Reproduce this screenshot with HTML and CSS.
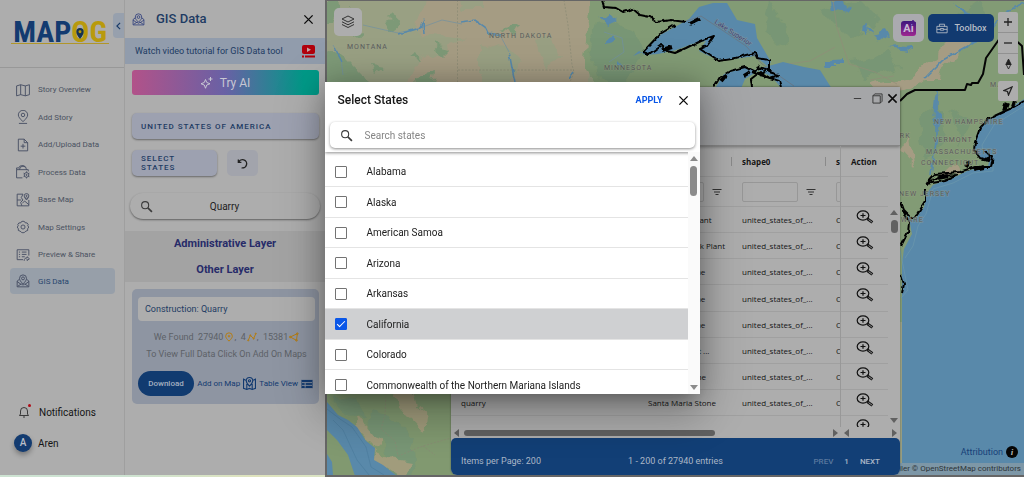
FILE: index.html
```html
<!DOCTYPE html>
<html lang="en">
<head>
<meta charset="utf-8">
<title>MAPOG - GIS Data</title>
<link rel="stylesheet" href="styles.css">
</head>
<body>
<svg class="defs" aria-hidden="true">
  <symbol id="close" viewBox="0 0 12 12"><path d="M1.5 1.5l9 9M10.5 1.5l-9 9"/></symbol>
  <symbol id="search" viewBox="0 0 24 24"><circle cx="9.5" cy="9.5" r="6.5"/><path d="M14.5 14.5L22 22" stroke-width="3"/></symbol>
  <symbol id="gis" viewBox="0 0 24 24"><path d="M6 9l-4 3v10h20V12l-4-3M2 13l7 5M22 13l-7 5M3 21l6-4 3 2 3-2 6 4M12 17C8 13 6 10.500 6 7.500a6 6 0 0 1 12 0c0 3-2 5.500-6 9.500z"/><circle cx="12" cy="7.500" r="2.500"/></symbol>
  <symbol id="zoomin" viewBox="0 0 18 14"><ellipse cx="7" cy="5.500" rx="5.800" ry="4.600"/><path d="M4.500 5.500h5M7 3.300v4.400"/><path d="M11.500 8.800l4.900 3.600" stroke-width="2.800"/><path d="M12.500 9.600l3.500 2.500" stroke="#adadad" stroke-width=".8"/></symbol>
  <symbol id="filter" viewBox="0 0 10 8"><path d="M.5 1.500h9M2 4h6M3.500 6.500h3"/></symbol>
</svg>

<div class="app">
  <aside class="sidebar">
    <div class="brand"><a class="logo" href="#" aria-label="MAPOG"><span>MAP</span><span class="og">OG</span>
      <svg class="pin" viewBox="0 0 8 12"><path d="M4 12C1 8 0 6 0 4a4 4 0 0 1 8 0c0 2-1 4-4 8z"/><circle cx="4" cy="4" r="1.600"/></svg></a>
      <button class="collapse" aria-label="Collapse"><svg viewBox="0 0 6 10"><path d="M5 1L1 5l4 4"/></svg></button>
    </div>
    <ul class="nav">
      <li><a href="#"><svg viewBox="0 0 24 24"><path d="M1 5l7-2v17l-7 2zM8 3l8 2v17l-8-2M16 5l7-2v17l-7 2"/></svg>Story Overview</a></li>
      <li><a href="#"><svg viewBox="0 0 24 24"><path d="M12 20C7 15 4 12 4 8.500a8 8 0 0 1 16 0C20 12 17 15 12 20z"/><circle cx="12" cy="8.500" r="3"/><path d="M5 23h14"/></svg>Add Story</a></li>
      <li><a href="#"><svg viewBox="0 0 24 24"><path d="M14 2H4v20h16V8zM14 2v6h6M12 10v8M8 14h8"/></svg>Add/Upload Data</a></li>
      <li><a href="#"><svg viewBox="0 0 24 24"><path d="M11 22H1V8h20v3M1 8V5h5M6 8a6 6 0 0 1 12 0M5 4a6 4 0 0 1 11-1"/><circle cx="18" cy="17" r="4"/><circle cx="18" cy="17" r="1"/><path d="M18 11v2M18 21v2M13 14l2 1M21 19l2 1M13 20l2-1M21 15l2-1"/></svg>Process Data</a></li>
      <li><a href="#"><svg viewBox="0 0 24 24"><path d="M12 2H2v20h20V12M12 2l-3 6 3 4-4 4 2 6M2 12h7M11 17l4-3 7 6"/><circle cx="18" cy="5" r="4"/><circle cx="18" cy="5" r="1"/><path d="M15 8l3 4 3-4"/></svg>Base Map</a></li>
      <li><a href="#"><svg viewBox="0 0 24 24"><path d="M9 3l3-1 3 1 1 2 3 0 2 3-1 2 2 2-2 3 0 3-3 1-2 2-3 1-3-1-2-2-3-1 0-3-2-3 2-2-1-2 2-3 3 0z"/><circle cx="12" cy="12" r="3.500"/></svg>Map Settings</a></li>
      <li><a href="#"><svg viewBox="0 0 24 24"><path d="M12 20H2V3h20v10M5 7h2M10 7h8M5 11h2M10 11h8M5 15h2M10 15h5M14 22c0-4 2-5 5-5v-2l4 3.500-4 3V19"/></svg>Preview &amp; Share</a></li>
      <li class="active"><a href="#"><svg><use href="#gis"/></svg>GIS Data</a></li>
    </ul>
    <div class="account">
      <a href="#"><span class="bell"><svg viewBox="0 0 24 24"><path d="M3 19h18l-2-3V10a7 7 0 0 0-14 0v6zM10 22h4"/></svg></span>Notifications</a>
      <a href="#"><span class="avatar">A</span>Aren</a>
    </div>
  </aside>

  <section class="panel">
    <header class="panel-head"><svg class="gis"><use href="#gis"/></svg><h1>GIS Data</h1><button class="plain" aria-label="Close panel"><svg class="x"><use href="#close"/></svg></button></header>
    <a class="tutorial" href="#">Watch video tutorial for GIS Data tool<svg viewBox="0 0 13 13"><rect width="13" height="9" rx="2"/><path class="play" d="M5 2.500l4 2.200-4 2.200z"/><path d="M0 10.500h2v2H0zM3 10.500h10v2H3z"/></svg></a>
    <div class="controls">
      <button class="tryai"><svg viewBox="0 0 24 24"><path d="M9 5l2.500 6L18 13.500 11.500 16 9 22.500 6.500 16 0 13.500 6.500 11zM19 0v8M15 4h8"/></svg>Try AI</button>
      <button class="pick country">UNITED STATES OF AMERICA</button>
      <div class="pick-row"><button class="pick">SELECT<br>STATES</button><button class="reset" aria-label="Reset"><svg viewBox="0 0 12 12"><path d="M1.500 1.500v3.300h3.300M1.800 4.800A4.500 4.500 0 1 1 5 10.700"/></svg></button></div>
      <label class="find"><svg><use href="#search"/></svg><input type="text" value="Quarry" aria-label="Search layer"></label>
    </div>
    <div class="layers"><a href="#">Administrative Layer</a><a href="#">Other Layer</a></div>
    <article class="card">
      <h2>Construction: Quarry</h2>
      <p>We Found&nbsp; 27940<svg viewBox="0 0 12 12"><path d="M6 11C3 8 2 6.500 2 5a4 4 0 0 1 8 0c0 1.500-1 3-4 6zM4.500 5h3M6 3.500v3"/></svg>,&nbsp; 4<svg viewBox="0 0 12 12"><path d="M1.500 10L4 4l4 4 2.500-6"/><circle cx="1.500" cy="10" r=".7"/><circle cx="4" cy="4" r=".7"/><circle cx="8" cy="8" r=".7"/><circle cx="10.500" cy="2" r=".7"/></svg>,&nbsp; 15381<svg viewBox="0 0 12 12"><path d="M1.500 6L10 2 9 10z"/><circle cx="1.500" cy="6" r="1"/><circle cx="10" cy="2" r="1"/><circle cx="9" cy="10" r="1"/></svg></p>
      <p>To View Full Data Click On Add On Maps</p>
      <div class="actions">
        <button class="download">Download</button>
        <button class="plain">Add on Map<svg viewBox="0 0 24 24"><path d="M5 6L1 4v17l6 2 5-2 5 2 6-2V4l-4 2M7 13v10M17 13v10M12 17C8 13 6 10 6 7a6 6 0 0 1 12 0c0 3-2 6-6 10z"/><circle cx="12" cy="7" r="2"/></svg></button>
        <button class="plain">Table View<svg class="tbl" viewBox="0 0 13 10"><rect width="13" height="10" rx="1"/><path d="M1 3.500h11M1 6.500h11M4.500 3.500V9"/></svg></button>
      </div>
    </article>
  </section>

  <main class="map">
    <svg class="terrain" viewBox="327 1 697 474" preserveAspectRatio="xMidYMid slice">
      <defs><filter id="ragged" x="-5%" y="-5%" width="110%" height="110%"><feTurbulence type="fractalNoise" baseFrequency="0.060" numOctaves="3" seed="4"/><feDisplacementMap in="SourceGraphic" scale="16" xChannelSelector="R" yChannelSelector="G"/></filter>
      <filter id="rough" x="-5%" y="-5%" width="110%" height="110%"><feTurbulence type="fractalNoise" baseFrequency="0.150" numOctaves="2" seed="8"/><feDisplacementMap in="SourceGraphic" scale="4" xChannelSelector="R" yChannelSelector="G"/></filter></defs>
      <rect x="327" y="1" width="697" height="474" fill="#99a083"/>
      <g filter="url(#ragged)">
        <path fill="#a59c83" d="M425-10H590V95H400l20-35 45-20-50-8z"/>
        <path fill="#99a083" d="M480 50l20-8 20 20-10 30H480zM535 40l15-5 8 25-14 8zM455-6h25v14h-20z"/>
        <path fill="#829b74" d="M592-10H1040V320H690V95H600L585 60z"/>
        <path fill="#789674" d="M597 25l18-5 20 12 10 25-22 30-25-10-8-30zM820 10l40-10 20 20-30 20zM770 0l20 30-10 15-16-15zM850 60l40-8 10 14-35 14zM950 20l30-20 10 20-30 20zM920 120l20-16 6 40-20 20zM950 110l20 10-10 25z"/>
        <path fill="#7d9977" d="M325 50l20 8 15 15 25 18h-60zM385 20l10-4 4 8-8 6zM405 60l10-6 6 8zM430 45l18 4-6 6zM372 66l12 2-8 6zM415 78l22-6-4 18h-16zM350 34l14-2-4 8zM325 0h15l-8 22h-7zM500 30l20-4-5 8zM350 6l8 4-8 4z"/>
        <path fill="#a59c83" d="M870 85l40-8 30-25 25-25 14 4-30 30-34 28-40 8zM900 150l10-15 4 30zM925 80l14-14-2 14zM940 175l14-12 4 10z"/>
        <path fill="#81996f" d="M320 385h140v100H320z"/>
        <path fill="#789674" d="M372 410l20 5 20 25 4 40h-22l-10-35-14-14zM330 395l25 2 12 22-20-4z"/>
        <path fill="#a19c7c" d="M395 385h16l5 22 12 10-2 16-14-15-14-8-4-18zM355 418l14 8 12 16-8 6-16-16zM372 448l14 10 24 4-5 20-18-12-18-8z"/>
        <path fill="#5989aa" d="M598 18l10-4 8 4-12 8zM606 36l6-2v8l-6 2zM617 60l4 4-4 3zM830 0l20 8-4 4-14-2zM872 32l14-4 4 10-14-2zM950 2l20 10-4 6zM824 62l20-2v6h-16zM935 95l5 4-2 30-5-8zM868 22l4 8-8 4zM890 48l18-2 4 6z"/>
      </g>
      <g fill="none" stroke="#898974" stroke-width=".7"><path stroke-dasharray="2 1.500" d="M457.500 0v88M458 70h116M564 0l4 25 4 40 2 7-4 10M386 393l-1 22-4 14 14 12 3 15 25-10 28-8M423 446l12 9"/><path stroke="#918c79" d="M833 0l4 28 12 36 26 8 22 12M780 65l30-4 25-14M870 80l24-4"/><path stroke="#7191a0" d="M363 25l35 8 22-5 22-8 20 4M333 45l8 14 2 16M500 35l9 17M604 32l18 6 2 14-15 10"/></g>
      <g fill="none" stroke="#5989aa" stroke-width="1.600" filter="url(#rough)"><path d="M398 34l12-3 10-3 3-6 1 12M461 22l14-2 10 7 3 6 14 2M509 52l3 16 3 14M569 78l4-6M1028 0l-25 14-10 14-25 18-25 14-18 18M937 90v45l-6 40M335 48l7 14"/></g>
      <g fill="#5989aa">
        <path d="M643 52l8-9 9-8 15-8 14-8 10-12 14-4 14 0 10 17 18 4 2 14 14 24-4 4-12-10-14 2-20 2-14-5-8-4 7-10-14 3-16 6-18 4-13 1-6-4-6 5z"/>
        <path d="M765 67l18-5 21 5 16 3 12 19h-50l-10-12-16-8z"/>
        <path d="M714 90l10-16 22-7 12 4-13 8-5 12z"/>
        <path d="M1024 99l-12 8-9 5-15 7-8 9-5 14-1 8 6 8 9 4-1 4-13 3-8 2-10 5-24 9-6 8-3 14-8 11-5 2-5-8 4 12 2 10-8 15-2 15v217h126z"/>
        <path d="M327 402l11 13 10 5 9 7 9 14 9 7-1 12 9 5 14 11h-42l-7-21-11-15-10-10zM327 454l5 8 1 13h-6z"/>
      </g>
      <g fill="none" stroke="#4c7d9d" stroke-width=".7"><path d="M327 409l13 10 12 8 14 20 5 20 13 8M333 420l10 10 14 30 12 15"/><path stroke="#6b98ac" d="M1024 106l-30 19-12 20 1 6 10 4v16l-20 2-20 10-20 6-7 25-8 12-5 20-8 12M900 250l8 40-7 8"/><path stroke="#6c727c" d="M684 22l17-6 45 30 16 18 32 22"/></g>
      <g fill="none" stroke="#050505" stroke-width="2" stroke-linejoin="round">
        <path d="M900 101l7-7 8-4h50l2-6 4 1 1-2 6 0 5-9 3-16 14-20h13l9 8 2 29"/>
        <g filter="url(#rough)">
          <path d="M602 0l2 7 12 1 7 4 10-3 7 6 10 2 7 5 14-2 14 2"/>
          <path d="M643 52l17-18 15-9M643 52l6 2 12-9 6 6 8 2 11-5 14-7 14-5-7 10-7 3 9 6 9 6 14-2 14-4 9-2 2 5 12 2v12l10 3-9 3-10-3-8-3"/>
          <path d="M714 87l6-10 10-6 15-4 10 5 4-7M752 87l-1-8 9-7 10 6 9 3 2 6M757 68l10 2-8 6"/>
          <path d="M1024 101l-12 7-9 4-15 7-8 9-5 14-1 8 6 8 9 3 1-7-4-2 7 4-2 11-16 0-6 2-10 3-24 2-8 9M926 184l14-8 18-1-14 6-18 3M925 190v12l-8 13-5 3-8-8-3-8M904 211l5 12-1 9-7 14M901 275l3 9-2 9"/>
        </g>
        <path stroke-width="4" filter="url(#rough)" d="M690 24l10-5M721 81l5-6M744 76l5-3M662 50l10-3M1004 111l3-8M1012 107l2-6M966 167l3-6M974 169l10-2M985 160l4-2M938 178l10-2"/>
      </g>
      <g class="places">
        <text x="347" y="49">MONTANA</text><text x="489" y="38">NORTH DAKOTA</text><text x="604" y="70">MINNESOTA</text>
        <text x="934" y="124">NEW HAMPSHIRE</text><text x="933" y="142">VERMONT</text><text x="926" y="154">MASSACHUSETTS</text><text x="921" y="165">CONNECTICUT</text><text x="899" y="196">NEW JERSEY</text><text x="880" y="222">DELAWARE</text><text x="868" y="138">NEW YORK</text><text x="990" y="87">MAINE</text>
        <text class="lake" transform="translate(714 23) rotate(33)">Lake Superior</text>
      </g>
    </svg>

    <button class="tile basemap" aria-label="Layers"><svg viewBox="0 0 14 14"><path d="M7 1l6 3-6 3-6-3zM1 6.800l6 3 6-3M1 9.500l6 3 6-3"/></svg></button>
    <div class="tools">
      <button class="tile ai" aria-label="AI"><span>Ai</span><svg viewBox="0 0 6 6"><path d="M3 0v6M0 3h6"/></svg></button>
      <button class="toolbox"><svg viewBox="0 0 14 12"><path d="M1 3.500h12v7.500H1zM4 3.500V1h6v2.500M1 7h4M9 7h4M5 6h4v2H5z"/></svg>Toolbox</button>
      <div class="zooms">
        <div class="stack"><button aria-label="Zoom in"><svg viewBox="0 0 10 10"><path d="M5 1v8M1 5h8"/></svg></button><button aria-label="Zoom out"><svg viewBox="0 0 10 10"><path d="M1 5h8"/></svg></button><button aria-label="Compass"><svg class="compass" viewBox="0 0 10 12"><path d="M5 0l3 6H2z" fill="#222"/><path d="M2.500 6L5 11l2.500-5z"/></svg></button></div>
        <button class="locate" aria-label="Locate"><svg viewBox="0 0 10 10"><path d="M9 1L5.500 9 4.500 5.500 1 4.500z"/></svg></button>
      </div>
    </div>
    <a class="attr" href="#">Attribution <b>i</b></a>
    <div class="credits">© MapTiler © OpenStreetMap contributors</div>

    <section class="window">
      <header><button aria-label="Minimize"><svg viewBox="0 0 12 12"><path d="M2 6h8"/></svg></button><button class="max" aria-label="Maximize"><svg viewBox="0 0 12 12"><path d="M1 3h8v8H1zM1 3l2-2h8v8l-2 2"/></svg></button><button class="shut" aria-label="Close"><svg><use href="#close"/></svg></button></header>
      <div class="grid">
        <div class="main">
          <table>
            <colgroup><col class="c1"><col class="c2"><col class="c2"><col class="c2"></colgroup>
            <tr class="h"><th>type</th><th>name</th><th>shape0</th><th>shape1</th></tr>
            <tr class="f"><td><div><input aria-label="Filter type"><svg><use href="#filter"/></svg></div></td><td><div><input aria-label="Filter name"><svg><use href="#filter"/></svg></div></td><td><div><input aria-label="Filter shape0"><svg><use href="#filter"/></svg></div></td><td><div><input aria-label="Filter shape1"><svg><use href="#filter"/></svg></div></td></tr>
            <tr><td>quarry</td><td>Sandy Rock Plant</td><td>united_states_of_...</td><td>California</td></tr>
            <tr><td>quarry</td><td>Mountain Rock Plant</td><td>united_states_of_...</td><td>California</td></tr>
            <tr><td>quarry</td><td>Old Stone Mine</td><td>united_states_of_...</td><td>California</td></tr>
            <tr><td>quarry</td><td>Old Stone Mine</td><td>united_states_of_...</td><td>California</td></tr>
            <tr><td>quarry</td><td>Old Stone Mine</td><td>united_states_of_...</td><td>California</td></tr>
            <tr><td>quarry</td><td>Valley Cement ...</td><td>united_states_of_...</td><td>California</td></tr>
            <tr><td>quarry</td><td>Southern Stone</td><td>united_states_of_...</td><td>California</td></tr>
            <tr><td>quarry</td><td>Santa Maria Stone</td><td>united_states_of_...</td><td>California</td></tr>
            <tr><td>quarry</td><td>Santa Maria</td><td>united_states_of_...</td><td>California</td></tr>
          </table>
        </div>
        <div class="pinned">
          <table>
            <tr class="h"><th>Action</th></tr><tr class="f"><td></td></tr>
            <tr><td><button aria-label="Zoom to row 1"><svg><use href="#zoomin"/></svg></button></td></tr>
            <tr><td><button aria-label="Zoom to row 2"><svg><use href="#zoomin"/></svg></button></td></tr>
            <tr><td><button aria-label="Zoom to row 3"><svg><use href="#zoomin"/></svg></button></td></tr>
            <tr><td><button aria-label="Zoom to row 4"><svg><use href="#zoomin"/></svg></button></td></tr>
            <tr><td><button aria-label="Zoom to row 5"><svg><use href="#zoomin"/></svg></button></td></tr>
            <tr><td><button aria-label="Zoom to row 6"><svg><use href="#zoomin"/></svg></button></td></tr>
            <tr><td><button aria-label="Zoom to row 7"><svg><use href="#zoomin"/></svg></button></td></tr>
            <tr><td><button aria-label="Zoom to row 8"><svg><use href="#zoomin"/></svg></button></td></tr>
            <tr><td><button aria-label="Zoom to row 9"><svg><use href="#zoomin"/></svg></button></td></tr>
          </table>
        </div>
        <div class="vbar dark"><i class="up"></i><i class="thumb"></i><i class="down"></i></div>
        <div class="hbar"><i class="left"></i><i class="thumb"></i><i class="right"></i></div>
        <div class="hbar small"><i class="left"></i><i class="right"></i></div>
      </div>
      <footer><span>Items per Page: 200</span><span class="range">1 - 200 of 27940 entries</span><div><button disabled>PREV</button><span>1</span><button>NEXT</button></div></footer>
    </section>
  </main>
</div>
<div class="underline"></div>

<div class="overlay">
  <div class="dialog" role="dialog" aria-labelledby="dlg">
    <div class="dialog-top">
      <header><h2 id="dlg">Select States</h2><button class="apply">APPLY</button><button class="plain" aria-label="Close dialog"><svg class="x"><use href="#close"/></svg></button></header>
      <label class="states-search"><svg><use href="#search"/></svg><input type="text" placeholder="Search states" aria-label="Search states"></label>
    </div>
    <div class="dialog-body">
      <ul class="states">
        <li><label><input type="checkbox">Alabama</label></li>
        <li><label><input type="checkbox">Alaska</label></li>
        <li><label><input type="checkbox">American Samoa</label></li>
        <li><label><input type="checkbox">Arizona</label></li>
        <li><label><input type="checkbox">Arkansas</label></li>
        <li class="on"><label><input type="checkbox" checked>California</label></li>
        <li><label><input type="checkbox">Colorado</label></li>
        <li><label><input type="checkbox">Commonwealth of the Northern Mariana Islands</label></li>
      </ul>
      <div class="vbar"><i class="up"></i><i class="thumb"></i><i class="down"></i></div>
    </div>
  </div>
</div>
</body>
</html>
```
FILE: styles.css
```css
* { box-sizing: border-box; }
body { margin: 0; height: 100vh; overflow: hidden; display: flex; flex-direction: column; font-family: Roboto, sans-serif; font-size: 10px; color: #151515; background: #adadad; }
button { font: inherit; color: inherit; border: 0; padding: 0; background: none; display: flex; align-items: center; justify-content: center; }
input { font: inherit; color: inherit; min-width: 0; }
a { color: inherit; text-decoration: none; }
h1, h2, p, ul { margin: 0; padding: 0; font-weight: 400; }
li { list-style: none; }
svg { fill: none; stroke: currentColor; stroke-width: 1.5; flex: none; }
.defs { position: absolute; width: 0; height: 0; }
.app { flex: 1; min-height: 0; display: grid; grid-template-columns: 125px 200px minmax(0, 1fr); }
.underline { height: 2px; background: linear-gradient(90deg, #cde3d2 0 12%, #dfe3bd 25%, #cfe3d0 45%, #e6cfd6 55%, #e2e3bb 80%, #cde5d5); }
.x { width: 11px; height: 11px; color: #0c0c0c; }

.sidebar { display: flex; flex-direction: column; border-right: 1px solid #9f9f9f; }
.brand { height: 68px; border-bottom: 1px solid #989898; display: flex; align-items: flex-start; justify-content: flex-end; padding-top: 13px; gap: 4px; }
.logo { position: relative; display: flex; margin-top: 1px; height: 30px; padding: 0 2px; border-bottom: 1px solid #b0962a; font: bold 30px/36px "Roboto Condensed", "Open Sans Condensed", "Noto Sans Condensed", "DejaVu Sans Condensed", sans-serif; color: #133b70; }
.logo .og { color: #b99a0c; }
.pin { position: absolute; right: 25px; top: 14px; width: 8px; height: 11px; fill: #16334f; stroke: none; }
.pin circle { fill: #b99a0c; }
.collapse { width: 11px; height: 25px; background: #97a0ad; border-radius: 4px 0 0 4px; color: #1b3c68; }
.collapse svg { width: 5px; height: 8px; }
.nav { padding: 8px 9px 0 10px; }
.nav li { height: 27px; display: grid; }
.nav li:nth-child(even) { height: 28px; }
.nav a { display: flex; align-items: center; gap: 8px; padding-left: 6px; font-size: 8px; color: #4b5261; border-radius: 4px; }
.nav svg { width: 14px; height: 14px; color: #424a60; }
.nav li.active { height: 26px; }
.nav .active a { background: #979fa9; color: #27466e; }
.account { margin-top: auto; padding: 0 0 22px 14px; display: grid; gap: 11px; }
.account a { display: flex; align-items: center; gap: 6px; height: 20px; }
.bell { position: relative; width: 19px; display: grid; place-items: center; }
.bell svg { width: 12px; height: 12px; }
.bell::after { content: ""; position: absolute; right: 2px; top: -2px; width: 3px; height: 3px; border-radius: 50%; background: #b00b16; }
.avatar { width: 18px; height: 18px; border-radius: 50%; background: #133b70; color: #b9bfc8; font-weight: 500; line-height: 18px; text-align: center; box-shadow: 0 3px 5px rgba(0,0,0,.3); }

.panel { display: flex; flex-direction: column; color: #1d3b63; }
.panel-head { height: 38px; display: flex; align-items: center; padding: 0 11px 0 7px; gap: 11px; }
.panel-head .gis { width: 13px; height: 13px; color: #2c3c7b; }
.panel-head h1 { flex: 1; font-size: 13px; line-height: 15px; padding-bottom: 2px; font-weight: 500; }
.tutorial { height: 26px; background: #919cac; display: flex; align-items: center; justify-content: space-between; padding: 0 10px; font-size: 9px; }
.tutorial svg { width: 13px; height: 13px; fill: #b1000c; stroke: none; }
.tutorial .play { fill: #c7a5a5; }
.controls { padding: 6px 6px 11px 7px; display: flex; flex-direction: column; }
.tryai { height: 25px; border-radius: 3px; background: linear-gradient(90deg, #b25289, #6861a5 50%, #009987 92%); color: #c7c7d3; font-size: 12px; gap: 7px; }
.tryai svg { width: 12px; height: 12px; stroke-width: 2; }
.pick { background: #9da1b0; border-radius: 5px; box-shadow: 0 1px 2px rgba(0,0,0,.4); font-size: 8px; font-weight: 500; letter-spacing: 1px; line-height: 9px; padding: 0 9px; justify-content: flex-start; text-align: left; height: 26px; }
.country { margin-top: 18px; height: 26px; }
.pick-row { display: flex; gap: 10px; margin-top: 11px; }
.pick-row .pick { width: 85px; }
.reset { width: 31px; background: #a2a4ac; border-radius: 5px; color: #222; }
.reset svg { width: 11px; height: 11px; }
.find { display: flex; align-items: center; height: 26px; margin: 17px -1px 1px -2px; border-radius: 13px; box-shadow: 0 1px 2px rgba(0,0,0,.45); padding: 0 10px; color: #222; }
.find svg, .states-search svg { width: 13px; height: 13px; stroke-width: 2; color: #3b3b3b; }
.find input { flex: 1; border: 0; background: none; text-align: center; padding: 0 14px 0 0; }
.layers { height: 51px; background: #a3a3a3; display: grid; align-content: center; justify-items: center; gap: 10px; font-size: 11px; line-height: 16px; font-weight: 700; color: #272b69; }
.card { margin: 7px 6px 0 7px; padding: 8px 4px 8px 6px; border-radius: 5px; background: #8e95a2; display: grid; }
.card h2 { height: 24px; line-height: 24px; padding-left: 7px; border-radius: 4px; background: #adadad; font-size: 9px; }
.card p { text-align: center; color: #5d6167; font-size: 9px; line-height: 17px; }
.card h2 + p { margin-top: 8px; }
.card p svg { width: 10px; height: 10px; stroke-width: 1.2; color: #b57d14; margin-left: 1px; vertical-align: -2px; }
.actions { display: flex; justify-content: space-between; align-items: center; margin-top: 8px; font-size: 8px; color: #123a70; }
.download { width: 56px; height: 25px; border-radius: 13px; background: #113b70; color: #a5b0c0; font-weight: 500; }
.actions .plain { gap: 3px; }
.actions svg { width: 13px; height: 13px; stroke-width: 2; }
.actions .tbl { height: 10px; width: 12px; fill: #123a70; stroke: #8e95a2; stroke-width: 1; margin-right: 2px; }

.map { position: relative; margin: 1px 0 0 2px; overflow: hidden; box-shadow: 0 0 0 2px #666; }
.terrain { position: absolute; width: 100%; height: 100%; stroke: none; }
.places { fill: #595b5b; font-size: 7px; letter-spacing: 1px; stroke: #a0a48c; stroke-width: 1px; stroke-opacity: .5; paint-order: stroke; }
.places .lake { fill: #3e3f79; letter-spacing: 0; font-size: 7px; }
.tile { width: 28px; height: 28px; border-radius: 5px; background: #aaaaaf; color: #333; }
.basemap { position: absolute; left: 7px; top: 7px; background: #adadad; }
.basemap svg { width: 14px; height: 14px; stroke-width: 1; }
.tools { position: absolute; right: 6px; top: 11px; display: flex; gap: 4px; align-items: flex-start; }
.tools > .tile, .toolbox { margin-top: 2px; }
.ai { width: 31px; position: relative; }
.ai span { width: 15px; height: 15px; border-radius: 3px; background: linear-gradient(#3d167c, #9e2791); color: #c8b8d4; font-size: 11px; line-height: 16px; font-weight: 700; }
.ai svg { position: absolute; right: 8px; top: 6px; width: 6px; height: 6px; color: #4a1b83; }
.toolbox { height: 28px; width: 66px; border-radius: 5px; background: #123a70; color: #b7bdc7; font-size: 9px; font-weight: 500; gap: 7px; }
.toolbox svg { width: 12px; height: 11px; stroke-width: 1; }
.zooms { display: grid; gap: 7px; color: #222; }
.stack, .locate { border-radius: 2px; background: #adadad; }
.zooms button { width: 20px; height: 20px; }
.stack button + button { border-top: 1px solid #919191; height: 21px; }
.zooms svg { width: 10px; height: 10px; stroke-width: 1.3; }
.zooms .compass { width: 9px; height: 11px; stroke-width: 1; }
.attr { position: absolute; right: 6px; bottom: 17px; display: flex; gap: 3px; align-items: center; font-size: 9px; color: #173f78; }
.attr b { width: 12px; height: 12px; border-radius: 50%; background: #050505; color: #b8b8b8; font: italic bold 9px/12px "Liberation Serif", serif; text-align: center; }
.credits { position: absolute; right: 0; bottom: 0; height: 12px; padding: 0 3px; background: #7d97a7; font: 8px/12px Roboto, sans-serif; color: #2e3538; }

.window { position: absolute; left: 124px; right: 124px; top: 86px; bottom: 0; display: flex; flex-direction: column; background: #adadad; font-family: "Open Sans", sans-serif; box-shadow: 0 0 2px rgba(0,0,0,.4); border-radius: 2px 2px 6px 6px; }
.window > header { height: 59px; background: #a5a6a8; border-bottom: 1px solid #858585; box-shadow: 0 1px 3px rgba(0,0,0,.35); display: flex; justify-content: flex-end; align-items: flex-start; padding: 5px 2px; }
.window > header button { width: 12px; height: 12px; margin-right: 8px; color: #333; }
.window > header svg { width: 11px; height: 11px; stroke-width: 1; }
.window > header .max { margin-right: 3px; }
.window > header .shut { margin: 0; color: #0c0c0c; }
.window > header .shut svg { stroke-width: 1.6; }
.grid { flex: 1; min-height: 0; display: grid; grid-template: minmax(0, 1fr) 11px / minmax(0, 1fr) 47px 12px; }
.main, .pinned { overflow: hidden; }
.main { border-right: 1px solid #989898; }
table { border-collapse: separate; border-spacing: 0; table-layout: fixed; width: 469px; font-size: 8px; }
.pinned table { width: 100%; }
.c1 { width: 187px; }
.c2 { width: 94px; }
th, td { height: 26px; padding: 0 0 0 10px; text-align: left; white-space: nowrap; border-bottom: 1px solid #a0a0a0; overflow: hidden; }
tr:nth-child(5n + 1) td { height: 27px; }
.h th { height: 31px; background: linear-gradient(#8a8a8a, #8a8a8a) right center / 1px 9px no-repeat; }
.f td { height: 30px; }
.f div { display: flex; align-items: center; gap: 8px; }
.f input { width: 56px; height: 20px; border: 1px solid #979797; border-radius: 2px; background: #adadad; }
.f svg { width: 10px; height: 8px; stroke-width: 1.2; color: #333; }
.pinned td button { width: 18px; height: 14px; margin: -6px 0 0 5px; color: #111; }
.pinned td svg { width: 18px; height: 14px; stroke-width: 1.2; }
.pinned .h th { background: none; }
.window footer { height: 37px; flex: none; background: #123f76; border-radius: 5px 5px 6px 6px; color: #aab6c6; display: grid; grid-template-columns: 1fr auto 1fr; padding: 9px 10px 0; align-items: center; font: 9px Roboto, sans-serif; }
.window footer div { display: flex; justify-content: flex-end; gap: 11px; padding-right: 10px; font-size: 8px; font-weight: 500; }
.window footer button:disabled { color: #5a789e; }

.vbar { position: relative; display: flex; flex-direction: column; align-items: center; padding: 4px 0; width: 12px; }
.vbar .down { margin-top: auto; }
i.up, i.down { border: 4px solid transparent; }
i.up { border-top: 0; border-bottom: 5px solid #8b8b8b; }
i.down { border-bottom: 0; border-top: 5px solid #8b8b8b; }
i.thumb { width: 7px; height: 30px; border-radius: 4px; background: #8b8b8b; margin-top: 5px; }
.dark { padding-top: 64px; }
.dark .thumb { height: 13px; background: #616161; }
.dark .up { border-bottom-color: #616161; }
.dark .down { border-top-color: #616161; }
.hbar { display: flex; align-items: center; padding: 0 3px; }
.hbar .thumb { width: 251px; height: 6px; margin: 0 auto 0 5px; background: #616161; }
.hbar i.left, .hbar i.right { border: 4px solid transparent; }
.hbar i.left { border-left: 0; border-right: 5px solid #616161; }
.hbar i.right { border-right: 0; border-left: 5px solid #616161; }
.small { grid-column: 2 / 4; justify-content: space-between; }

.overlay { position: fixed; inset: 0 0 1px; display: grid; place-items: center; }
.dialog { width: min(375px, 100%); max-height: calc(100vh - 165px); height: 100%; display: flex; flex-direction: column; overflow: hidden; background: #fff; box-shadow: 0 11px 15px -7px rgba(0,0,0,.2), 0 24px 38px 3px rgba(0,0,0,.14), 0 9px 46px 8px rgba(0,0,0,.14), 0 0 26px rgba(0,0,0,.2); }
.dialog-top { padding: 4px 5px 4px; box-shadow: 0 1px 3px rgba(0,0,0,.45); position: relative; }
.dialog header { height: 28px; display: flex; align-items: center; padding: 0 6px 0 8px; gap: 15px; }
.dialog h2 { flex: 1; font-size: 12px; font-weight: 500; }
.apply { color: #0a57e8; font-weight: 700; font-size: 9px; }
.states-search { display: flex; align-items: center; gap: 12px; height: 26px; margin-top: 8px; padding: 0 10px; border-radius: 5px; box-shadow: 0 1px 3px rgba(0,0,0,.45); }
.states-search input { flex: 1; border: 0; background: none; padding: 0; }
.states-search input::placeholder { color: #858585; }
.dialog-body { flex: 1; min-height: 0; display: flex; }
.states { flex: 1; overflow: hidden; padding-top: 5px; }
.states li { height: 30px; border-bottom: 1px solid #e4e4e4; }
.states li:nth-child(even) { height: 31px; }
.states label { height: 100%; display: flex; align-items: center; gap: 20px; padding-left: 10px; color: #212121; }
.states .on { background: #cfd0d2; }
.states input { appearance: none; width: 12px; height: 12px; margin: 0; border: 1px solid #737373; border-radius: 1px; display: grid; place-items: center; background: #fff; }
.states input:checked { background: #0a57e8; border-color: #0a57e8; }
.states input:checked::after { content: ""; width: 7px; height: 3px; margin-bottom: 2px; border: solid #fff; border-width: 0 0 1px 1px; transform: rotate(-45deg); }
.dialog .vbar { background: #fafafa; padding-top: 4px; }
```
